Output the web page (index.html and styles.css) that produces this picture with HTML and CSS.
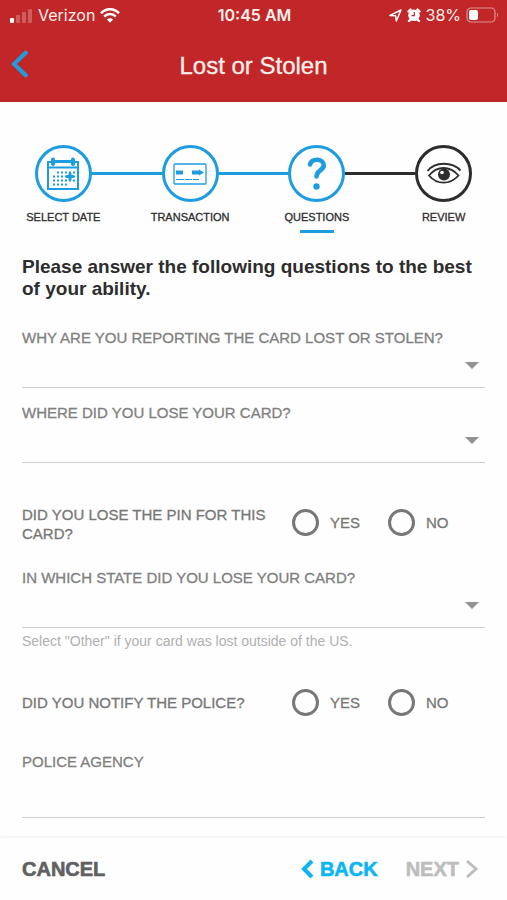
FILE: index.html
```html
<!DOCTYPE html>
<html lang="en">
<head>
<meta charset="utf-8">
<meta name="viewport" content="width=device-width, initial-scale=1">
<title>Lost or Stolen</title>
<link rel="stylesheet" href="styles.css">
</head>
<body>
<header class="top">
  <div class="status">
    <div class="status-left">
      <svg width="23" height="15" viewBox="0 0 23 15" fill="#fff" aria-hidden="true">
        <rect x="0" y="10" width="4" height="5" rx="1"/>
        <g opacity=".25"><rect x="6" y="7" width="4" height="8" rx="1"/><rect x="12" y="4" width="4" height="11" rx="1"/><rect x="18" y="1" width="4" height="14" rx="1"/></g>
      </svg>
      <span>Verizon</span>
      <svg width="20" height="15" viewBox="0 0 20 15" fill="none" stroke="#fff" stroke-width="2.6" aria-hidden="true">
        <path d="M1 5.4C6-.2 14-.2 19 5.4M4.2 8.7C7.5 5.1 12.5 5.1 15.8 8.7"/>
        <path d="M10 14.8 6.9 11.5C8.6 9.8 11.4 9.8 13.1 11.5Z" fill="#fff" stroke="none"/>
      </svg>
    </div>
    <span class="clock">10:45 AM</span>
    <div class="status-right">
      <svg width="13" height="13" viewBox="0 0 13 13" fill="none" stroke="#fff" stroke-width="1.5" stroke-linejoin="round" aria-hidden="true"><path d="M1 6.4 12 1 7.3 12 6.6 6.700Z"/></svg>
      <svg width="14" height="14" viewBox="0 0 14 14" aria-hidden="true">
        <path d="M1.500 3.500 3.500 1.500M12.500 3.500 10.500 1.500M3 12 2 13M11 12 12 13" stroke="#fff" stroke-width="2.400" stroke-linecap="round"/>
        <circle cx="7" cy="7.3" r="5.8" fill="#fff"/><path d="M7.300 4V7.700H4.500" fill="none" stroke="#c12628" stroke-width="1.2"/>
      </svg>
      <span>38%</span>
      <svg width="33" height="16" viewBox="0 0 33 16" aria-hidden="true">
        <rect x="1" y="1" width="28" height="14" rx="4" fill="none" stroke="#fff" stroke-opacity=".5" stroke-width="1.2"/>
        <rect x="3" y="3" width="9" height="10" rx="2" fill="#fff"/><path d="M31 5.5Q33 8 31 10.5Z" fill="#fff" opacity=".5"/>
      </svg>
    </div>
  </div>
  <div class="titlebar">
    <button class="nav-back" type="button" aria-label="Go back">
      <svg width="18" height="28" viewBox="0 0 18 28" fill="none" stroke="#209de0" stroke-width="4"><path d="M16 1.5 3 14 16 26.5"/></svg>
    </button>
    <h1>Lost or Stolen</h1>
  </div>
</header>

<main>
  <ol class="steps">
    <li class="step done">
      <div class="rail"><span class="line none"></span><span class="ring">
        <svg width="34" height="34" viewBox="0 0 34 34" fill="none" stroke="currentColor" aria-hidden="true">
          <path d="M2 5H32V32H2ZM2 10.500H32" stroke-width="2"/><path d="M8 4.500H26" stroke-width="3"/>
          <path d="M7 2.500V7M27 2.500V7" stroke-width="4" stroke-linecap="round"/>
          <path d="M11 15.500H29M7 19.500H29M7 23.500H29M7 27.500H21" stroke-width="2" stroke-dasharray="2 2"/>
          <path d="M24 16V23.500M20.300 19.500H27.700" stroke-width="3"/>
        </svg></span><span class="line"></span></div>
      <span class="step-name">SELECT DATE</span>
    </li>
    <li class="step done">
      <div class="rail"><span class="line"></span><span class="ring">
        <svg width="34" height="22" viewBox="0 0 34 22" fill="none" stroke="currentColor" aria-hidden="true">
          <rect x="1" y="1" width="32" height="20" rx="1" stroke-width="1.3"/>
          <path d="M3 9.5H10M19 9.5H27" stroke-width="4"/><path d="M26 6.5 31 9.5 26 12.5Z" fill="currentColor" stroke="none"/>
          <path d="M3 16.5H11M12 16.5H19M20 16.5H26" stroke-width="1.2"/>
        </svg></span><span class="line"></span></div>
      <span class="step-name">TRANSACTION</span>
    </li>
    <li class="step current" aria-current="step">
      <div class="rail"><span class="line"></span><span class="ring">
        <svg width="20" height="34" viewBox="0 0 20 34" fill="none" stroke="currentColor" aria-hidden="true">
          <path d="M3 7.5C4 4 7 2.7 10.5 2.8 14 3 17 5 16.8 8.5 16.5 13.5 9.7 13 9.5 19.5" stroke-width="4.6" stroke-linecap="round"/>
          <circle cx="9.5" cy="29.500" r="3.2" fill="currentColor" stroke="none"/>
        </svg></span><span class="line dark"></span></div>
      <span class="step-name">QUESTIONS</span>
    </li>
    <li class="step">
      <div class="rail"><span class="line"></span><span class="ring">
        <svg width="36" height="24" viewBox="0 0 36 24" fill="none" stroke="currentColor" aria-hidden="true">
          <path d="M1.500 9C9-.5 26-.5 34.500 8.500" stroke-width="2"/>
          <path d="M3 13.500C11 3.500 24 3.500 32.500 13.500 24 23 11 23 3 13.500Z" stroke-width="1.800"/>
          <circle cx="18" cy="12.500" r="6" fill="currentColor" stroke="none"/><circle cx="16" cy="10.500" r="1.800" fill="#fff" stroke="none"/>
        </svg></span><span class="line none"></span></div>
      <span class="step-name">REVIEW</span>
    </li>
  </ol>

  <form class="form" id="report">
    <h2>Please answer the following questions to the best of your ability.</h2>
    <div class="field">
      <label for="why">WHY ARE YOU REPORTING THE CARD LOST OR STOLEN?</label>
      <div class="select"><select id="why"><option value=""></option></select></div>
    </div>
    <div class="field">
      <label for="where">WHERE DID YOU LOSE YOUR CARD?</label>
      <div class="select"><select id="where"><option value=""></option></select></div>
    </div>
    <div class="choice pin" role="radiogroup" aria-labelledby="pin-q">
      <span class="question" id="pin-q">DID YOU LOSE THE PIN FOR THIS CARD?</span>
      <label class="option"><input type="radio" name="pin" value="yes">YES</label>
      <label class="option"><input type="radio" name="pin" value="no">NO</label>
    </div>
    <div class="field">
      <label for="state">IN WHICH STATE DID YOU LOSE YOUR CARD?</label>
      <div class="select"><select id="state" aria-describedby="state-hint"><option value=""></option></select></div>
      <p class="hint" id="state-hint">Select "Other" if your card was lost outside of the US.</p>
    </div>
    <div class="choice police" role="radiogroup" aria-labelledby="police-q">
      <span class="question" id="police-q">DID YOU NOTIFY THE POLICE?</span>
      <label class="option"><input type="radio" name="police" value="yes">YES</label>
      <label class="option"><input type="radio" name="police" value="no">NO</label>
    </div>
    <div class="field">
      <label for="agency">POLICE AGENCY</label>
      <input class="text" type="text" id="agency">
    </div>
  </form>
</main>

<footer class="actions">
  <button class="cancel" type="button">CANCEL</button>
  <button class="back" type="button">
    <svg width="14" height="20" viewBox="0 0 14 20" fill="none" stroke="currentColor" stroke-width="4" aria-hidden="true"><path d="M12 2 4 10 12 18"/></svg>BACK</button>
  <button class="next" type="submit" form="report" disabled>NEXT<svg width="14" height="20" viewBox="0 0 14 20" fill="none" stroke="currentColor" stroke-width="3" aria-hidden="true"><path d="M2 2 11 10 2 18"/></svg></button>
</footer>
</body>
</html>
```
FILE: styles.css
```css
* { box-sizing: border-box; }

body {
  display: flex;
  flex-direction: column;
  min-height: 100vh;
  margin: 0;
  background: #fefefe;
  color: #2d2d2d;
  font-family: "Liberation Sans", Arial, sans-serif;
}

button {
  padding: 0;
  border: 0;
  background: none;
  color: inherit;
  font: inherit;
}

svg { display: block; }

.top {
  background: #c12628;
  color: #fff0ec;
  padding-bottom: 10px;
}

.status {
  display: grid;
  grid-template-columns: 1fr auto 1fr;
  align-items: center;
  height: 30px;
  padding: 0 8px 0 10px;
  font: 16px/20px Inter, sans-serif;
}
.status-left, .status-right { display: flex; align-items: center; gap: 5px; }
.status-right { justify-content: flex-end; }
.clock { font-weight: 600; }

.titlebar {
  display: grid;
  grid-template-columns: 40px 1fr 40px;
  align-items: center;
  height: 62px;
  padding: 10px 0 0;
}
.nav-back { padding: 0 0 4px 11px; }
h1 {
  margin: 0;
  text-align: center;
  font-size: 24px;
  line-height: 28px;
  font-weight: 400;
  -webkit-text-stroke: 0.3px;
}

.steps {
  display: grid;
  grid-template-columns: repeat(4, 1fr);
  margin: 0;
  padding: 43px 0 0;
  list-style: none;
}
.step {
  display: flex;
  flex-direction: column;
  align-items: center;
  --tone: #2d2d2d;
}
.done, .current { --tone: #1d9ce0; }
.rail { display: flex; align-items: center; width: 100%; color: var(--tone); }
.line { flex: 1; height: 3px; background: var(--tone); }
.line.none { visibility: hidden; }
.line.dark { background: #2d2d2d; }
.ring {
  display: flex;
  align-items: center;
  justify-content: center;
  width: 57px;
  height: 57px;
  border: 3px solid var(--tone);
  border-radius: 50%;
}
.step-name {
  padding: 8px 0 6px;
  font-size: 11px;
  line-height: 14px;
  -webkit-text-stroke: 0.3px;
}
.current::after { content: ""; width: 34px; height: 3px; background: var(--tone); }

.form { padding: 23px 22px 20px; }
h2 {
  margin: 0 0 28px;
  font-size: 19px;
  line-height: 22px;
}
.field { margin-bottom: 15px; }
.field:last-child { margin-bottom: 0; }
.field > label {
  display: block;
  color: #808080;
  font-size: 15px;
  line-height: 20px;
  -webkit-text-stroke: 0.3px;
}
.select { position: relative; }
.select::after {
  content: "";
  position: absolute;
  right: 6px;
  top: 14px;
  border: 7px solid transparent;
  border-top-color: #929292;
  border-bottom: 0;
  pointer-events: none;
}
select, .text {
  display: block;
  width: 100%;
  height: 40px;
  padding: 0 24px 0 0;
  border: 0;
  border-bottom: 1px solid #cfcfcf;
  border-radius: 0;
  background: none;
  appearance: none;
  color: #2d2d2d;
  font: 15px/20px "Liberation Sans", Arial, sans-serif;
}
.text { height: 46px; padding: 0; }
.hint {
  margin: 4px 0 0;
  color: #b0b0b0;
  font-size: 14px;
  line-height: 18px;
}
.choice {
  display: grid;
  grid-template-columns: 1fr 96px 97px;
  align-items: start;
  color: #777;
  font-size: 15px;
  line-height: 19px;
  -webkit-text-stroke: 0.3px;
}
.pin { margin: 42px 0 25px; }
.police { margin: 35px 0 33px; }
.question { display: flex; align-items: center; min-height: 34px; padding-right: 20px; }
.option { display: flex; align-items: center; gap: 11px; height: 34px; }
.option input {
  width: 27px;
  height: 27px;
  margin: 0;
  border: 3px solid #777;
  border-radius: 50%;
  appearance: none;
}
.option input:checked { background: radial-gradient(#1d9ce0 50%, transparent 55%); }

.actions {
  position: sticky;
  bottom: 0;
  display: flex;
  align-items: center;
  gap: 28px;
  height: 62px;
  margin-top: auto;
  padding: 0 28px 0 22px;
  background: #fefefe;
  box-shadow: 0 -1px 3px rgba(0, 0, 0, 0.06);
  font-size: 20px;
  line-height: 24px;
  font-weight: 700;
  -webkit-text-stroke: 0.6px;
}
.cancel { margin-right: auto; color: #606060; }
.back, .next { display: flex; align-items: center; gap: 6px; }
.back { color: #0bb5f5; }
.next { color: #bdbdbd; }
```
